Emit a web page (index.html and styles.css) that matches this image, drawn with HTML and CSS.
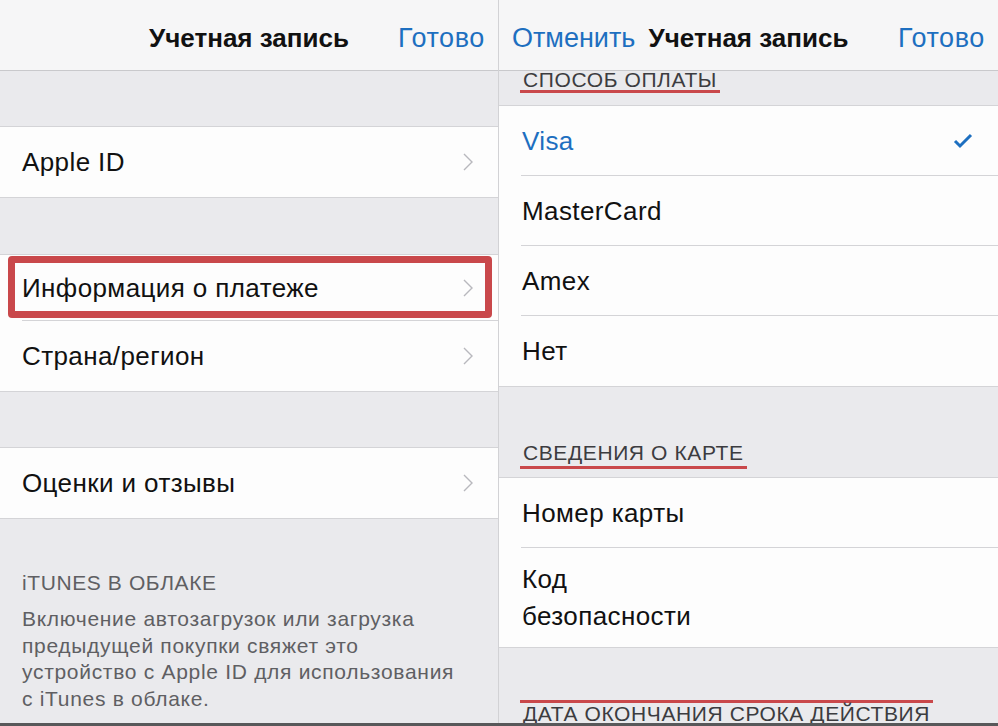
FILE: index.html
```html
<!DOCTYPE html>
<html lang="ru">
<head>
  <meta charset="UTF-8" />
  <meta name="viewport" content="width=device-width, initial-scale=1.0" />
  <title>Учетная запись</title>
  <link rel="stylesheet" href="styles.css">
</head>
<body>
  <div class="screen">
    <!-- список настроек учетной записи -->
    <section class="pane pane-left">
      <header class="navbar">
        <span></span>
        <span class="nav-title">Учетная запись</span>
        <span class="nav-btn nav-end">Готово</span>
      </header>

      <div class="gap gap-a"></div>
      <div class="group">
        <div class="row">
          <span>Apple ID</span>
          <svg class="chevron" viewBox="0 0 10 18"><polyline points="1,1 9,9 1,17" /></svg>
        </div>
      </div>

      <div class="gap gap-b"></div>
      <div class="group">
        <div class="row row-short marked">
          <span>Информация о платеже</span>
          <svg class="chevron" viewBox="0 0 10 18"><polyline points="1,1 9,9 1,17" /></svg>
        </div>
        <div class="row">
          <span>Страна/регион</span>
          <svg class="chevron" viewBox="0 0 10 18"><polyline points="1,1 9,9 1,17" /></svg>
        </div>
      </div>

      <div class="gap gap-c"></div>
      <div class="group">
        <div class="row">
          <span>Оценки и отзывы</span>
          <svg class="chevron" viewBox="0 0 10 18"><polyline points="1,1 9,9 1,17" /></svg>
        </div>
      </div>

      <div class="footer">
        <div class="footer-title">iTUNES В ОБЛАКЕ</div>
        <p class="footer-text">Включение автозагрузок или загрузка предыдущей покупки свяжет это устройство с Apple ID для использования с iTunes в облаке.</p>
      </div>
    </section>

    <!-- способ оплаты -->
    <section class="pane pane-right">
      <header class="navbar">
        <span class="nav-btn">Отменить</span>
        <span class="nav-title">Учетная запись</span>
        <span class="nav-btn nav-end">Готово</span>
      </header>

      <div class="section-head head-top">
        <span class="mark-under">СПОСОБ ОПЛАТЫ</span>
      </div>
      <div class="group">
        <div class="row selected">
          <span>Visa</span>
          <svg class="check" viewBox="0 0 20 16"><polyline points="2,8 7,13 18,2" /></svg>
        </div>
        <div class="row"><span>MasterCard</span></div>
        <div class="row"><span>Amex</span></div>
        <div class="row"><span>Нет</span></div>
      </div>

      <div class="section-head head-card">
        <span class="mark-under">СВЕДЕНИЯ О КАРТЕ</span>
      </div>
      <div class="group">
        <div class="row"><span>Номер карты</span></div>
        <div class="row row-tall"><span>Код<br>безопасности</span></div>
      </div>

      <div class="section-head head-date">
        <span class="mark-over">ДАТА ОКОНЧАНИЯ СРОКА ДЕЙСТВИЯ</span>
      </div>
    </section>
  </div>
</body>
</html>
```

FILE: styles.css
```css
body {
  margin: 0;
  font-family: "Liberation Sans", Arial, sans-serif;
  color: #111;
  background-color: #e9e9ec;
}
.screen {
  display: flex;
  width: 998px;
  height: 723px;
  overflow: hidden;
  border-bottom: 3px solid #58585a;
}
.pane {
  background-color: #eaeaed;
  overflow: hidden;
}
.pane-left {
  width: 498px;
  border-right: 1px solid #d2d2d5;
}
.pane-right {
  flex: 1;
}

/* навигационная панель */
.navbar {
  display: grid;
  grid-template-columns: 1fr auto 1fr;
  align-items: center;
  height: 71px;
  padding: 6px 13px 0;
  box-sizing: border-box;
  background-color: #f6f6f7;
  border-bottom: 1px solid #c9c9cc;
  font-size: 27px;
}
.nav-title {
  font-weight: bold;
  font-size: 26px;
}
.nav-btn {
  color: #1d6fc0;
}
.nav-end {
  justify-self: end;
  letter-spacing: 0.6px;
}

.gap-a {
  height: 55px;
}
.gap-b {
  height: 56px;
}
.gap-c {
  height: 55px;
}

/* группы строк */
.group {
  background-color: #fdfdfd;
  border-top: 1px solid #d4d4d7;
  border-bottom: 1px solid #d4d4d7;
}
.row {
  position: relative;
  display: flex;
  align-items: center;
  justify-content: space-between;
  height: 70px;
  padding: 0 25px 0 22px;
  font-size: 26px;
  letter-spacing: 0.4px;
}
.row + .row::before {
  content: "";
  position: absolute;
  top: -1px;
  left: 22px;
  right: 0;
  border-top: 1px solid #d4d4d7;
}
.row-short {
  height: 66px;
}
.chevron {
  width: 10px;
  height: 18px;
  fill: none;
  stroke: #b8b8bd;
  stroke-width: 1.4;
}

/* красная рамка вокруг пункта */
.marked::after {
  content: "";
  position: absolute;
  top: 1px;
  left: 8px;
  right: 6px;
  bottom: 3px;
  border: 7px solid #c9484b;
  border-radius: 4px;
}

.footer {
  padding: 51px 22px 0;
  color: #5f5f63;
  font-size: 21px;
  letter-spacing: 0.7px;
}
.footer-title {
  line-height: 26px;
  letter-spacing: 0.6px;
}
.footer-text {
  margin: 10px 0 0;
  line-height: 26.5px;
  width: 445px;
}

/* правая панель */
.pane-right .row {
  padding: 0 25px 0 23px;
}
.selected {
  color: #1d6fc0;
}
.check {
  width: 20px;
  height: 16px;
  fill: none;
  stroke: #1d6fc0;
  stroke-width: 3;
}
.row-tall {
  height: 99px;
  line-height: 37px;
}

.section-head {
  padding-left: 21px;
  font-size: 21px;
  color: #3c3c40;
  letter-spacing: 0.6px;
}
.head-top {
  height: 34px;
  line-height: 18px;
}
.head-card {
  height: 90px;
  box-sizing: border-box;
  padding-top: 54px;
  line-height: 24px;
}
.head-date {
  padding-top: 52px;
  line-height: 19px;
}
.mark-under {
  display: inline-block;
  padding: 0 3px 1px;
  border-bottom: 3px solid #c9484b;
}
.mark-over {
  display: inline-block;
  padding: 1px 3px 0;
  border-top: 3px solid #c9484b;
}
```
